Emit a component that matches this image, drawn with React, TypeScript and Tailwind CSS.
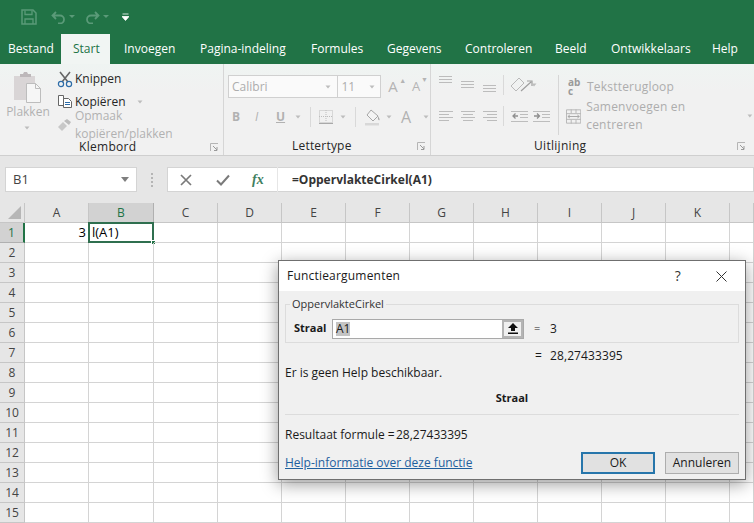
const FONT = "font-['Open_Sans','Liberation_Sans',sans-serif]";

const TABS = [
  { label: "Bestand", cls: "w-[61px] pl-[8px]" },
  { label: "Start", cls: "w-[49px] pl-[12px] bg-[#f1f5f3] text-[#217346]" },
  { label: "Invoegen", cls: "w-[77px] pl-[14px]" },
  { label: "Pagina-indeling", cls: "w-[111px] pl-[13px]" },
  { label: "Formules", cls: "w-[76px] pl-[13px]" },
  { label: "Gegevens", cls: "w-[78px] pl-[13px]" },
  { label: "Controleren", cls: "w-[90px] pl-[13px]" },
  { label: "Beeld", cls: "w-[56px] pl-[13px]" },
  { label: "Ontwikkelaars", cls: "w-[101px] pl-[13px]" },
  { label: "Help", cls: "w-[55px] pl-[13px]" },
];

const COLUMNS = [
  { name: "A", cls: "w-[64px]" },
  { name: "B", cls: "w-[65px]" },
  { name: "C", cls: "w-[64px]" },
  { name: "D", cls: "w-[64px]" },
  { name: "E", cls: "w-[64px]" },
  { name: "F", cls: "w-[64px]" },
  { name: "G", cls: "w-[64px]" },
  { name: "H", cls: "w-[64px]" },
  { name: "I", cls: "w-[64px]" },
  { name: "J", cls: "w-[64px]" },
  { name: "K", cls: "w-[64px]" },
  { name: "", cls: "w-[24px]" },
];

const ROWS = Array.from({ length: 15 }, (_, i) => i + 1);

function Caret({ className = "" }: { className?: string }) {
  return (
    <svg width="7" height="4" viewBox="0 0 7 4" className={className}>
      <path d="M0.5 0.5h5l-2.5 3z" fill="#bdbdbd" />
    </svg>
  );
}

function Launcher() {
  return (
    <svg width="9" height="9" viewBox="0 0 9 9" className="shrink-0">
      <path d="M0.5 8V0.5H8" fill="none" stroke="#b5b5b5" />
      <path d="M3 3l4 4M7 4v3.5H4" fill="none" stroke="#9a9a9a" />
    </svg>
  );
}

function Lines({ kind }: { kind: "left" | "center" | "right" | "plain" }) {
  const rows =
    kind === "plain"
      ? ["M1 1.5h13", "M1 4.5h13", "M1 7.5h13"]
      : kind === "left"
        ? ["M1 1.5h14", "M1 4.5h10", "M1 7.5h14", "M1 10.5h10"]
        : kind === "center"
          ? ["M1 1.5h14", "M3 4.5h10", "M1 7.5h14", "M3 10.5h10"]
          : ["M1 1.5h14", "M5 4.5h10", "M1 7.5h14", "M5 10.5h10"];
  return (
    <svg width="16" height="12" viewBox="0 0 16 12">
      {rows.map((d) => (
        <path key={d} d={d} stroke="#bcbcbc" fill="none" />
      ))}
    </svg>
  );
}

function Indent({ flip }: { flip?: boolean }) {
  return (
    <svg width="17" height="13" viewBox="0 0 17 13">
      <path d="M0 1.5h17M9 4.5h8M9 7.5h8M0 11.5h17" stroke="#bdbdbd" fill="none" />
      {flip ? (
        <path d="M1 6h5M4 3.5L6.5 6 4 8.5" stroke="#8f8f8f" fill="none" strokeWidth="1.3" />
      ) : (
        <path d="M7 6H2M4.5 3.5L2 6l2.5 2.5" stroke="#8f8f8f" fill="none" strokeWidth="1.3" />
      )}
    </svg>
  );
}

function GroupLabel({ text, className = "" }: { text: string; className?: string }) {
  return <div className={`text-[12px] leading-none text-[#262626] ${className}`}>{text}</div>;
}

function Klembord() {
  return (
    <div className="flex w-[224px] shrink-0 flex-col border-r border-[#d6d6d6]">
      <div className="flex h-[72px] pl-[5px]">
        <div className="flex w-[46px] flex-col items-center pt-[7px]">
          <svg width="32" height="32" viewBox="0 0 32 32">
            <path d="M2 5h21v24H2z" fill="#d9d5d6" />
            <path d="M8 6V3h3l1-2h3l1 2h3v3z" fill="#bdb8ba" />
            <path d="M14.5 12.5h9l5 5v14h-14z" fill="#f6f6f6" stroke="#bdbdbd" />
            <path d="M23.5 12.5v5h5" fill="none" stroke="#bdbdbd" />
          </svg>
          <span className="mt-[2px] text-[12px] leading-[14px] text-[#b1b1b1]">Plakken</span>
          <Caret className="mt-[7px]" />
        </div>
        <div className="flex flex-col pl-[6px] pt-[4px]">
          <div className="flex h-[23px] items-center gap-[2px] text-[12px] text-[#262626]">
            <svg width="16" height="17" viewBox="0 0 16 17">
              <path d="M3 1l8 10M13 1L5 11" stroke="#666" strokeWidth="1.6" fill="none" />
              <circle cx="4" cy="13" r="2.6" fill="none" stroke="#2d6ca8" strokeWidth="1.2" />
              <circle cx="12" cy="13" r="2.6" fill="none" stroke="#2d6ca8" strokeWidth="1.2" />
            </svg>
            <span>Knippen</span>
          </div>
          <div className="flex h-[23px] items-center gap-[2px] text-[12px] text-[#262626]">
            <svg width="16" height="15" viewBox="0 0 16 15">
              <path d="M1.5 1.5h5v10h-5z" fill="#fff" stroke="#666" />
              <path d="M6.5 4.5h5l3 3v6h-8z" fill="#fff" stroke="#666" />
              <path d="M8 8.5h5M8 10.5h5" stroke="#2d6ca8" />
            </svg>
            <span>Kopiëren</span>
            <Caret className="ml-[9px]" />
          </div>
          <div className="flex h-[23px] items-center gap-[2px] text-[12px] text-[#b1b1b1]">
            <svg width="16" height="14" viewBox="0 0 16 14">
              <path d="M1 9l5-5 4 4-5 5z" fill="#c8c8c8" />
              <path d="M7 3l3-2 4 3-2 3z" fill="#bcbcbc" />
            </svg>
            <span>Opmaak kopiëren/plakken</span>
          </div>
        </div>
      </div>
      <div className="flex h-[20px] items-start pl-[79px] pr-[4px] pt-[5px]">
        <GroupLabel text="Klembord" className="tracking-[0.3px]" />
        <span className="ml-auto pt-[2px]">
          <Launcher />
        </span>
      </div>
    </div>
  );
}

function Lettertype() {
  return (
    <div className="flex w-[207px] shrink-0 flex-col border-r border-[#d6d6d6]">
      <div className="h-[72px] pl-[4px] pt-[11px]">
        <div className="flex h-[23px] items-center">
          <div className="flex h-[23px] w-[111px] items-center justify-between border border-[#d0d0d0] bg-[#fafafa] pl-[3px] pr-[5px] text-[12px] text-[#adadad]">
            <span>Calibri</span>
            <Caret />
          </div>
          <div className="flex h-[23px] w-[43px] items-center justify-between border border-l-0 border-[#d0d0d0] bg-[#fafafa] pl-[3px] pr-[4px] text-[12px] text-[#adadad]">
            <span>11</span>
            <Caret />
          </div>
          <span className="relative ml-[7px] w-[20px] text-[15px] leading-none text-[#b4b4b4]">
            A<span className="absolute left-[11px] top-[-2px] text-[7px]">▲</span>
          </span>
          <span className="relative ml-[4px] w-[18px] text-[13px] leading-none text-[#b4b4b4]">
            A<span className="absolute left-[9px] top-[-4px] text-[7px]">▼</span>
          </span>
        </div>
        <div className="mt-[8px] flex h-[22px] items-center text-[#b1b1b1]">
          <span className="ml-[4px] w-[23px] text-[12px] font-bold">B</span>
          <span className="w-[21px] text-[12px] italic">I</span>
          <span className="w-[19px] text-[12px] font-bold underline">U</span>
          <Caret />
          <span className="mx-[8px] h-[20px] w-px bg-[#d9d9d9]" />
          <svg width="14" height="14" viewBox="0 0 14 14">
            <path d="M0.5 0.5h13v12h-13z M7 0v12 M0 6.5h14" stroke="#bdbdbd" strokeDasharray="1 1" fill="none" />
            <path d="M0 13.5h14" stroke="#a9a9a9" />
          </svg>
          <Caret className="ml-[7px]" />
          <span className="mx-[8px] h-[20px] w-px bg-[#d9d9d9]" />
          <svg width="17" height="17" viewBox="0 0 17 17">
            <path d="M7 1l7 6-5 5-6-6z" fill="#f4f4f4" stroke="#a6a6a6" />
            <path d="M14 7c1 2 2 3 1.5 4s-2 0-1.500-4z" fill="#a6a6a6" />
            <path d="M1 14h14v2.500H1z" fill="#d8d8d8" />
          </svg>
          <Caret className="ml-[5px]" />
          <span className="ml-[8px] w-[17px] text-[16px] leading-none">A</span>
          <Caret className="ml-[5px]" />
        </div>
      </div>
      <div className="flex h-[20px] items-start pl-[68px] pr-[4px] pt-[5px]">
        <GroupLabel text="Lettertype" className="tracking-[0.2px]" />
        <span className="ml-auto pt-[2px]">
          <Launcher />
        </span>
      </div>
    </div>
  );
}

function Uitlijning() {
  return (
    <div className="flex min-w-0 flex-1 flex-col">
      <div className="flex h-[72px] pl-[7px] pt-[11px]">
        <div className="flex w-[121px] shrink-0 flex-col border-r border-[#d6d6d6]">
          <div className="flex h-[24px] items-start">
            <span className="w-[22px]">
              <Lines kind="plain" />
            </span>
            <span className="mt-[5px] w-[22px]">
              <Lines kind="plain" />
            </span>
            <span className="mt-[9px] w-[22px]">
              <Lines kind="plain" />
            </span>
            <span className="ml-[-1px] h-[20px] w-px bg-[#d9d9d9]" />
            <svg width="26" height="18" viewBox="0 0 26 18" className="ml-[6px] mt-[1px]">
              <path d="M1 10l8-8 5 5-8 8z" fill="none" stroke="#b9b9b9" />
              <path d="M11 15l10-9M17 5h5v5" fill="none" stroke="#9f9f9f" strokeWidth="1.2" />
            </svg>
            <Caret className="ml-[-5px] mt-[8px]" />
          </div>
          <div className="mt-[7px] flex h-[20px] items-center">
            <span className="w-[22px]">
              <Lines kind="left" />
            </span>
            <span className="w-[22px]">
              <Lines kind="center" />
            </span>
            <span className="w-[22px]">
              <Lines kind="right" />
            </span>
            <span className="ml-[-1px] h-[20px] w-px bg-[#d9d9d9]" />
            <span className="ml-[7px] w-[22px]">
              <Indent />
            </span>
            <Indent flip />
          </div>
        </div>
        <div className="flex flex-col pl-[7px]">
          <div className="flex h-[24px] items-center gap-[5px] pl-[2px] text-[12px] text-[#adadad]">
            <span className="flex h-[18px] w-[14px] flex-col text-[10px] font-bold leading-[9px] text-[#9a9a9a]">
              <span>ab</span>
              <span>c</span>
            </span>
            <span className="tracking-[0.2px]">Tekstterugloop</span>
          </div>
          <div className="mt-[7px] flex h-[20px] items-center gap-[5px] text-[12px] text-[#adadad]">
            <svg width="16" height="15" viewBox="0 0 16 15">
              <path d="M0.5 0.5h15v14h-15z M0 4.5h16 M0 10.500h16 M5.500 0v4 M10.500 0v4 M5.500 11v4 M10.500 11v4" fill="none" stroke="#b5b5b5" />
              <path d="M2 7.500h12M4 6l-2 1.500L4 9M12 6l2 1.500L12 9" fill="none" stroke="#a5a5a5" />
            </svg>
            <span className="tracking-[0.2px]">Samenvoegen en centreren</span>
            <Caret className="ml-[5px]" />
          </div>
        </div>
      </div>
      <div className="flex h-[20px] items-start pl-[60px] pr-[8px] pt-[5px]">
        <GroupLabel text="Uitlijning" className="ml-[43px] tracking-[0.3px]" />
        <span className="ml-auto pt-[2px]">
          <Launcher />
        </span>
      </div>
    </div>
  );
}

function FormulaBar() {
  return (
    <div className="flex h-[47px] items-start bg-[#e6e6e6] pt-[11px]">
      <div className="ml-[5px] flex h-[25px] w-[132px] items-center justify-between border border-[#d4d4d4] bg-white pl-[7px] pr-[7px] text-[13px] text-[#444]">
        <span>B1</span>
        <svg width="8" height="5" viewBox="0 0 8 5">
          <path d="M0 0h8L4 5z" fill="#7f7f7f" />
        </svg>
      </div>
      <div className="flex h-[25px] w-[30px] flex-col items-center justify-center gap-[2px]">
        <span className="h-[2px] w-[2px] bg-[#b5b5b5]" />
        <span className="h-[2px] w-[2px] bg-[#b5b5b5]" />
        <span className="h-[2px] w-[2px] bg-[#b5b5b5]" />
        <span className="h-[2px] w-[2px] bg-[#b5b5b5]" />
      </div>
      <div className="flex h-[25px] w-[110px] items-center border border-r-0 border-[#d4d4d4] bg-white">
        <svg width="12" height="12" viewBox="0 0 12 12" className="ml-[12px]">
          <path d="M1 1l10 10M11 1L1 11" stroke="#7a7a7a" strokeWidth="1.7" fill="none" />
        </svg>
        <svg width="14" height="12" viewBox="0 0 14 12" className="ml-[24px]">
          <path d="M1 6.500l4 4L13 1.500" stroke="#7a7a7a" strokeWidth="2" fill="none" />
        </svg>
        <span className="ml-[22px] font-['Liberation_Serif',serif] text-[14px] font-bold italic leading-none text-[#3f7f5f]">
          fx
        </span>
      </div>
      <div className="ml-px flex h-[25px] flex-1 items-center border border-l-0 border-[#d4d4d4] bg-white pl-[14px] text-[12px] font-bold text-[#333]">
        =OppervlakteCirkel(A1)
      </div>
    </div>
  );
}

function Sheet() {
  return (
    <div className="flex flex-col">
      <div className="flex h-[20px]">
        <div className="flex w-[25px] items-end justify-end border-r border-b border-[#c6c6c6] bg-[#e6e6e6] p-[3px]">
          <svg width="13" height="13" viewBox="0 0 13 13">
            <path d="M13 0v13H0z" fill="#b6b6b6" />
          </svg>
        </div>
        {COLUMNS.map((col) => (
          <div
            key={col.name || "rest"}
            className={`flex items-center justify-center border-r border-b text-[12px] ${col.cls} ${
              col.name === "B"
                ? "border-r-[#b0b0b0] border-b-[#217346] bg-[#d2d2d2] text-[#217346]"
                : "border-[#c6c6c6] bg-[#e6e6e6] text-[#444]"
            }`}
          >
            {col.name}
          </div>
        ))}
      </div>
      {ROWS.map((row) => (
        <div key={row} className="flex h-[20px]">
          <div
            className={`flex w-[25px] items-center justify-center border-r border-b text-[12px] ${
              row === 1
                ? "border-r-2 border-r-[#217346] border-b-[#b0b0b0] bg-[#d2d2d2] text-[#217346]"
                : "border-[#c6c6c6] bg-[#e6e6e6] text-[#444]"
            }`}
          >
            {row}
          </div>
          {COLUMNS.map((col) => (
            <div
              key={col.name || "rest"}
              className={`relative border-r border-b border-[#d4d4d4] text-[13px] leading-[19px] text-black ${col.cls}`}
            >
              {row === 1 && col.name === "A" && <div className="pr-[2px] text-right">3</div>}
              {row === 1 && col.name === "B" && (
                <>
                  <div className="pl-[3px]">l(A1)</div>
                  <div className="absolute inset-x-[-1px] bottom-[-1px] top-[-1px] border-2 border-[#2f6f4f]" />
                  <div className="absolute bottom-[-3px] right-[-3px] h-[5px] w-[5px] border border-white bg-[#217346]" />
                </>
              )}
            </div>
          ))}
        </div>
      ))}
    </div>
  );
}

function Dialog() {
  return (
    <div className="absolute left-[278px] top-[260px] flex h-[220px] w-[468px] flex-col border border-[#6f6f6f] bg-[#f0f0f0] text-[12px] text-[#1a1a1a] shadow-[0_4px_16px_rgba(0,0,0,0.4)]">
      <div className="flex h-[30px] shrink-0 items-center bg-white pl-[8px] text-[12px] tracking-[0.2px]">
        <span>Functieargumenten</span>
        <span className="ml-auto mr-[35px] text-[14px] leading-none text-[#333]">?</span>
        <svg width="11" height="11" viewBox="0 0 11 11" className="mr-[18px]">
          <path d="M0.500 0.500l10 10M10.500 0.500l-10 10" stroke="#333" fill="none" />
        </svg>
      </div>
      <div className="relative mx-[6px] mt-[13px] h-[39px] shrink-0 border border-[#dcdcdc]">
        <span className="absolute left-[4px] top-[-8px] bg-[#f0f0f0] px-[2px] text-[11px] leading-[14px] text-[#333]">
          OppervlakteCirkel
        </span>
        <div className="flex h-full items-center pl-[8px] pt-[10px]">
          <span className="w-[38px] text-[11px] font-bold">Straal</span>
          <div className="flex h-[20px] w-[192px] items-center border border-[#a9a9a9] bg-white pl-[3px] pr-0">
            <span className="bg-[#c4c4c4] text-[12px] leading-[14px]">A1</span>
            <div className="ml-auto flex h-[18px] w-[21px] items-center justify-center border-2 border-[#b4b4b4] bg-[#f0f0f0]">
              <svg width="10" height="11" viewBox="0 0 10 11">
                <path d="M5 0L10 5H7v3H3V5H0zM0 9.500h10V11H0z" fill="#111" />
              </svg>
            </div>
          </div>
          <span className="ml-[10px] w-[16px] text-[11px]">=</span>
          <span>3</span>
        </div>
      </div>
      <div className="flex h-[19px] shrink-0 items-center pl-[256px] pt-[6px]">
        <span className="w-[15px]">=</span>
        <span className="tracking-[0.1px]">28,27433395</span>
      </div>
      <div className="mt-[2px] h-[18px] shrink-0 pl-[6px] leading-[18px]">Er is geen Help beschikbaar.</div>
      <div className="mt-[7px] h-[17px] shrink-0 text-center text-[11px] font-bold leading-[17px]">Straal</div>
      <div className="mx-[6px] mt-[8px] h-px shrink-0 bg-[#dcdcdc]" />
      <div className="mt-[11px] flex h-[18px] shrink-0 items-center pl-[6px]">
        <span className="w-[111px]">Resultaat formule =</span>
        <span>28,27433395</span>
      </div>
      <div className="mt-[8px] flex h-[22px] shrink-0 items-center px-[6px]">
        <a className="text-[#1f5f9e] underline">Help-informatie over deze functie</a>
        <button className="ml-auto h-[22px] w-[74px] border-2 border-[#2776ab] bg-[#e1e1e1] text-[12px]">OK</button>
        <button className="ml-[10px] h-[22px] w-[74px] border border-[#adadad] bg-[#e1e1e1] text-[12px]">Annuleren</button>
      </div>
    </div>
  );
}

export default function App() {
  return (
    <div className={`relative h-[523px] w-[754px] overflow-hidden bg-white ${FONT}`}>
      <div className="flex h-[34px] items-center bg-[#217346] pl-[21px]">
        <svg width="16" height="16" viewBox="0 0 16 16">
          <path d="M1 1h11l3 3v11H1z" fill="none" stroke="#5a9a78" strokeWidth="1.500" />
          <path d="M4 1.500v4h7v-4M4 15v-5h8v5" fill="none" stroke="#5a9a78" strokeWidth="1.300" />
        </svg>
        <svg width="15" height="13" viewBox="0 0 15 13" className="ml-[14px]">
          <path d="M5 1L1.500 4.500 5 8M2 4.500h7a4 4 0 0 1 0 8H7" fill="none" stroke="#5a9a78" strokeWidth="1.800" />
        </svg>
        <svg width="6" height="4" viewBox="0 0 6 4" className="ml-[3px]">
          <path d="M0 0h6L3 3z" fill="#5a9a78" />
        </svg>
        <svg width="15" height="13" viewBox="0 0 15 13" className="ml-[10px]">
          <path d="M10 1l3.500 3.500L10 8M13 4.500H6a4 4 0 0 0 0 8h2" fill="none" stroke="#5a9a78" strokeWidth="1.800" />
        </svg>
        <svg width="6" height="4" viewBox="0 0 6 4" className="ml-[3px]">
          <path d="M0 0h6L3 3z" fill="#5a9a78" />
        </svg>
        <svg width="7" height="8" viewBox="0 0 7 8" className="ml-[13px]">
          <path d="M0.500 1h6M0 3.500h7L3.500 7.500z" stroke="#fff" fill="#fff" strokeWidth="0.800" />
        </svg>
      </div>
      <div className="flex h-[30px] bg-[#217346] text-[12px] leading-[30px] text-white">
        {TABS.map((tab) => (
          <div key={tab.label} className={tab.cls}>
            {tab.label}
          </div>
        ))}
      </div>
      <div className="flex h-[92px] border-b border-[#cfcfcf] bg-gradient-to-b from-[#eff4f2] to-[#f1f1f1] to-30%">
        <Klembord />
        <Lettertype />
        <Uitlijning />
      </div>
      <FormulaBar />
      <Sheet />
      <Dialog />
    </div>
  );
}
